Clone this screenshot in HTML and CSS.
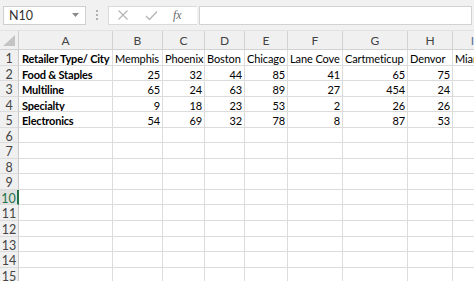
FILE: index.html
```html
<!DOCTYPE html>
<html>
<head>
<meta charset="utf-8">
<link rel="stylesheet" href="styles.css">
</head>
<body>
<div class="app">
  <div class="toolbar">
    <div class="namebox"><span>N10</span><svg class="caret" width="7" height="4" viewBox="0 0 7 4"><path d="M0 0H7L3.5 4Z" fill="#8a8a8a"/></svg></div>
    <div class="grip"><i></i><i></i><i></i></div>
    <div class="fxbox">
      <svg class="ic" width="12" height="12" viewBox="0 0 12 12"><path d="M1.5 1.5L10.5 10.5M10.5 1.5L1.5 10.5" stroke="#b5b5b5" stroke-width="1.2" fill="none"/></svg>
      <svg class="ic" width="13" height="11" viewBox="0 0 13 11"><path d="M1 6L4.5 9.5L12 1.5" stroke="#b5b5b5" stroke-width="1.3" fill="none"/></svg>
      <span class="fx">fx</span>
    </div>
    <div class="formula"></div>
  </div>
  <div class="sheet">
    <div class="corner"><svg width="12" height="11" viewBox="0 0 12 11"><path d="M12 0V11H0Z" fill="#c4c4c4"/></svg></div>
    <div class="ch">A</div><div class="ch">B</div><div class="ch">C</div><div class="ch">D</div><div class="ch">E</div><div class="ch">F</div><div class="ch">G</div><div class="ch">H</div><div class="ch chi">I</div>

    <div class="rh">1</div><div class="c b">Retailer Type/ City</div><div class="c">Memphis</div><div class="c">Phoenix</div><div class="c">Boston</div><div class="c">Chicago</div><div class="c">Lane Cove</div><div class="c">Cartmeticup</div><div class="c">Denvor</div><div class="c">Miami</div>
    <div class="rh">2</div><div class="c b">Food &amp; Staples</div><div class="c n">25</div><div class="c n">32</div><div class="c n">44</div><div class="c n">85</div><div class="c n">41</div><div class="c n">65</div><div class="c n">75</div><div class="c"></div>
    <div class="rh">3</div><div class="c b">Multiline</div><div class="c n">65</div><div class="c n">24</div><div class="c n">63</div><div class="c n">89</div><div class="c n">27</div><div class="c n">454</div><div class="c n">24</div><div class="c"></div>
    <div class="rh">4</div><div class="c b">Specialty</div><div class="c n">9</div><div class="c n">18</div><div class="c n">23</div><div class="c n">53</div><div class="c n">2</div><div class="c n">26</div><div class="c n">26</div><div class="c"></div>
    <div class="rh">5</div><div class="c b">Electronics</div><div class="c n">54</div><div class="c n">69</div><div class="c n">32</div><div class="c n">78</div><div class="c n">8</div><div class="c n">87</div><div class="c n">53</div><div class="c"></div>
    <div class="rh">6</div><div class="c"></div><div class="c"></div><div class="c"></div><div class="c"></div><div class="c"></div><div class="c"></div><div class="c"></div><div class="c"></div><div class="c"></div>
    <div class="rh">7</div><div class="c"></div><div class="c"></div><div class="c"></div><div class="c"></div><div class="c"></div><div class="c"></div><div class="c"></div><div class="c"></div><div class="c"></div>
    <div class="rh">8</div><div class="c"></div><div class="c"></div><div class="c"></div><div class="c"></div><div class="c"></div><div class="c"></div><div class="c"></div><div class="c"></div><div class="c"></div>
    <div class="rh">9</div><div class="c"></div><div class="c"></div><div class="c"></div><div class="c"></div><div class="c"></div><div class="c"></div><div class="c"></div><div class="c"></div><div class="c"></div>
    <div class="rh sel">10</div><div class="c"></div><div class="c"></div><div class="c"></div><div class="c"></div><div class="c"></div><div class="c"></div><div class="c"></div><div class="c"></div><div class="c"></div>
    <div class="rh">11</div><div class="c"></div><div class="c"></div><div class="c"></div><div class="c"></div><div class="c"></div><div class="c"></div><div class="c"></div><div class="c"></div><div class="c"></div>
    <div class="rh">12</div><div class="c"></div><div class="c"></div><div class="c"></div><div class="c"></div><div class="c"></div><div class="c"></div><div class="c"></div><div class="c"></div><div class="c"></div>
    <div class="rh">13</div><div class="c"></div><div class="c"></div><div class="c"></div><div class="c"></div><div class="c"></div><div class="c"></div><div class="c"></div><div class="c"></div><div class="c"></div>
    <div class="rh">14</div><div class="c"></div><div class="c"></div><div class="c"></div><div class="c"></div><div class="c"></div><div class="c"></div><div class="c"></div><div class="c"></div><div class="c"></div>
    <div class="rh">15</div><div class="c"></div><div class="c"></div><div class="c"></div><div class="c"></div><div class="c"></div><div class="c"></div><div class="c"></div><div class="c"></div><div class="c"></div>
  </div>
</div>
</body>
</html>
```
FILE: styles.css
```css
html, body {
  margin: 0;
  padding: 0;
  background: #ffffff;
  overflow: hidden;
}
.app {
  width: 474px;
  height: 281px;
  overflow: hidden;
  font-family: Lato, "Open Sans", sans-serif;
  font-size: 11px;
  color: #111;
}
.toolbar {
  height: 31px;
  background: #f1f1f1;
  border-bottom: 1px solid #e2e2e2;
  display: flex;
  align-items: center;
  padding-left: 3px;
  box-sizing: border-box;
}
.namebox {
  width: 83px;
  height: 19px;
  background: #fff;
  border: 1px solid #cfcfcf;
  box-sizing: border-box;
  display: flex;
  align-items: center;
  justify-content: space-between;
  padding: 0 6px 0 5px;
  color: #333;
  font-size: 12.5px;
}
.grip {
  width: 22px;
  display: flex;
  flex-direction: column;
  align-items: center;
  gap: 2px;
}
.grip i {
  width: 2px;
  height: 2px;
  background: #b0b0b0;
}
.fxbox {
  width: 89px;
  height: 19px;
  background: #fff;
  border: 1px solid #dadada;
  border-right: none;
  box-sizing: border-box;
  display: flex;
  align-items: center;
  padding-left: 8px;
  gap: 16px;
}
.fx {
  font-family: "Liberation Serif", serif;
  font-style: italic;
  font-size: 12px;
  color: #6a6a6a;
  margin-left: -1px;
}
.formula {
  flex: 1;
  height: 19px;
  margin-left: 2px;
  margin-right: 2px;
  background: #fff;
  border: 1px solid #d2d2d2;
  box-sizing: border-box;
}
.sheet {
  display: grid;
  grid-template-columns: 19px 94px 50px 42px 40px 43px 55px 65px 45px 40px;
  grid-template-rows: 19px repeat(15, 15.55px);
  width: 493px;
}
.sheet > div {
  box-sizing: border-box;
  border-right: 1px solid #dcdcdc;
  border-bottom: 1px solid #dcdcdc;
  white-space: nowrap;
  overflow: hidden;
}
.corner {
  background: #f0f0f0;
  display: flex;
  align-items: flex-end;
  justify-content: flex-end;
  padding: 0 3px 3px 0;
  border-color: #cfcfcf !important;
}
.ch {
  background: #f0f0f0;
  color: #444;
  text-align: center;
  line-height: 19px;
  font-size: 12px;
  border-color: #d2d2d2 !important;
}
.chi {
  color: #5b7190;
}
.rh {
  background: #f0f0f0;
  color: #444;
  text-align: center;
  line-height: 16px;
  padding-top: 1px;
  font-size: 12.5px;
  border-right-color: #c8c8c8 !important;
}
.rh.sel {
  background: #e1e1e1;
  color: #217346;
  border-right: 2px solid #217346 !important;
}
.c {
  line-height: 16px;
  padding: 1px 1px 0 2px;
  color: #000;
  letter-spacing: -0.1px;
}
.b {
  font-weight: bold;
  padding-left: 3px;
  letter-spacing: -0.2px;
}
.n {
  text-align: right;
  padding-right: 2px;
}
```
